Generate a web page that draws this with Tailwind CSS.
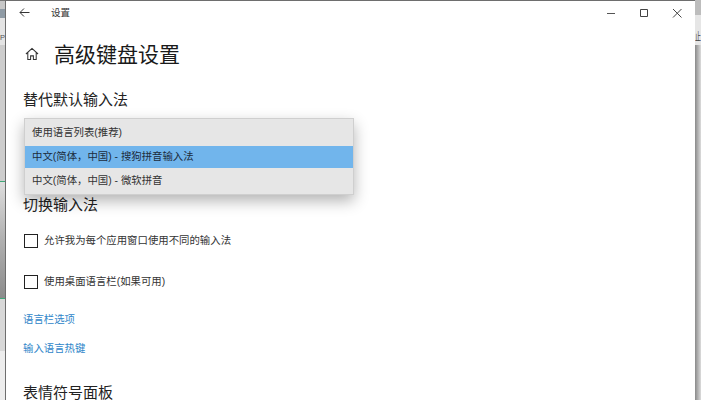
<!DOCTYPE html>
<html lang="zh-CN">
<head>
  <meta charset="UTF-8" />
  <title>设置</title>
  <script src="https://cdn.jsdelivr.net/npm/@tailwindcss/browser@4"></script>
</head>
<body class="bg-[#a8a8a8] w-[701px] h-[400px] overflow-hidden font-['Liberation_Sans','Noto_Sans_CJK_SC',sans-serif]">
  <div class="flex h-[400px]">
    <!-- what shows behind the window, left -->
    <div class="w-[5px] shrink-0 h-full overflow-hidden flex flex-col bg-[#d8d8d8]">
      <div class="h-px bg-[#777]"></div>
      <div class="h-[8px] bg-[#c8c8c8]"></div>
      <div class="h-[9px] bg-[#8f9ba5]"></div>
      <div class="h-[12px] bg-[#e4e4e4]"></div>
      <div class="h-[15px] bg-[#e4e4e4] text-[7.5px] leading-[15px] text-[#555]">P</div>
      <div class="h-[136px] bg-[#cdcdcd]"></div>
      <div class="h-px bg-[#3fa878]"></div>
      <div class="h-[116px] bg-gradient-to-b from-[#dedede] via-[#b0b0b0] to-[#8c8c8c]"></div>
      <div class="h-px bg-[#3fa878]"></div>
      <div class="h-[52px] bg-[#d8d8d8]"></div>
      <div class="flex-1 bg-[#ededed]"></div>
    </div>

    <!-- settings window -->
    <div class="w-[690px] shrink-0 h-full bg-white border-l border-t border-[#6e6e6e] relative">
      <!-- title bar -->
      <div class="h-[23px] flex items-center text-[#333]">
        <svg class="ml-[13px] w-[11px] h-[11px]" viewBox="0 0 11 11" fill="none" stroke="#333" stroke-width="1">
          <path d="M1 5.5H10.5M5 1.5 1 5.5 5 9.5" />
        </svg>
        <span class="ml-[21px] mt-[2px] text-[9.5px]">设置</span>
        <div class="ml-auto flex items-center gap-[23px] mr-[13px]">
          <svg class="w-[10px] h-[10px]" viewBox="0 0 10 10" fill="none" stroke="#555" stroke-width="1"><path d="M1 5.5H9" /></svg>
          <svg class="w-[10px] h-[10px]" viewBox="0 0 10 10" fill="none" stroke="#444" stroke-width="1"><path d="M1.5 1.5H8.5V8.5H1.5Z" /></svg>
          <svg class="w-[10px] h-[10px]" viewBox="0 0 10 10" fill="none" stroke="#444" stroke-width="1"><path d="M1 1 9.5 9.5M9.5 1 1 9.5" /></svg>
        </div>
      </div>

      <!-- page content -->
      <div class="pl-[17px] pt-[12px]">
        <div class="flex items-center h-[36px]">
          <svg class="w-[14px] h-[14px] ml-[2px]" viewBox="0 0 15 15" fill="none" stroke="#333" stroke-width="1.1">
            <path d="M1 7.5 7.5 1.5 14 7.5M3 6V13.5H6V9.5H9V13.5H12V6" />
          </svg>
          <h1 class="ml-[15px] text-[21px] text-[#1a1a1a] leading-none">高级键盘设置</h1>
        </div>
        <h2 class="mt-[16px] text-[15px] leading-[24px] text-[#222]">替代默认输入法</h2>

        <div class="h-[81px]"></div>
        <h2 class="text-[15px] leading-[24px] text-[#222]">切换输入法</h2>

        <label class="flex items-center mt-[16px] pl-px h-[16px] text-[10.4px] text-[#333]">
          <span class="w-[14px] h-[14px] border border-[#222] mr-[6px]"></span>允许我为每个应用窗口使用不同的输入法
        </label>
        <label class="flex items-center mt-[25px] pl-px h-[16px] text-[10.4px] text-[#333]">
          <span class="w-[14px] h-[14px] border border-[#222] mr-[6px]"></span>使用桌面语言栏(如果可用)
        </label>

        <a class="block mt-[22px] text-[10.4px] leading-[16px] text-[#2f86c9]">语言栏选项</a>
        <a class="block mt-[13px] text-[10.4px] leading-[16px] text-[#2f86c9]">输入语言热键</a>
        <h2 class="mt-[24px] text-[15px] leading-[24px] text-[#222]">表情符号面板</h2>
      </div>

      <!-- open dropdown lies over the page -->
      <div class="absolute left-[18px] top-[117px] w-[330px] bg-[#e6e6e6] border border-[#cfcfcf] shadow-[0_6px_14px_rgba(0,0,0,0.3)] text-[10.4px] text-[#333]">
        <div class="h-[27px] flex items-center pl-[7px]">使用语言列表(推荐)</div>
        <div class="h-[22px] flex items-center pl-[7px] bg-[#71b5ec] text-[#1c2c3c]">中文(简体，中国) - 搜狗拼音输入法</div>
        <div class="h-[26px] flex items-center pl-[7px]">中文(简体，中国) - 微软拼音</div>
      </div>
    </div>

    <!-- what shows behind the window, right -->
    <div class="w-[6px] shrink-0 h-full flex flex-col bg-gradient-to-r from-[#8a8a8a] to-[#dcdcdc]">
      <div class="h-[15px] bg-[#bdbdbd]"></div>
      <div class="h-[30px] pt-[17px] bg-[#e6e6e6] text-[6px] leading-[7px] text-[#444]"><span class="inline-block origin-top scale-y-[1.8]">止</span></div>
    </div>
  </div>
</body>
</html>
